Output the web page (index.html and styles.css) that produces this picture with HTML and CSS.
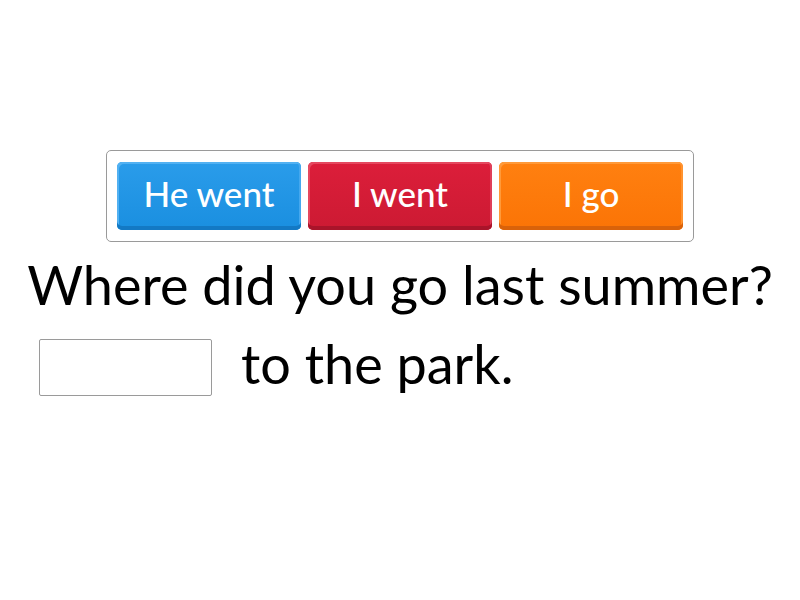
FILE: index.html
```html
<!DOCTYPE html>
<html lang="en">
<head>
  <meta charset="UTF-8">
  <title>Complete the sentence</title>
  <link rel="stylesheet" href="styles.css">
</head>
<body>
  <div class="game">
    <div class="options">
      <div class="tile blue">He went</div>
      <div class="tile red">I went</div>
      <div class="tile orange">I go</div>
    </div>
    <div class="question">Where did you go last summer?</div>
    <div class="answer">
      <span class="blank"></span>
      <span class="rest">to the park.</span>
    </div>
  </div>
</body>
</html>
```

FILE: styles.css
```css
body {
  margin: 0;
  background-color: #fff;
  font-family: Lato, "Open Sans", sans-serif;
  color: #000;
}
.game {
  width: 800px;
  height: 600px;
  padding-top: 150px;
  box-sizing: border-box;
}
.options {
  width: 588px;
  height: 92px;
  margin: 0 auto;
  box-sizing: border-box;
  border: 1px solid #9a9a9a;
  border-radius: 5px;
  padding: 11px 10px;
  display: flex;
  gap: 7px;
}
.tile {
  flex: 1;
  height: 68px;
  border-radius: 5px;
  color: #fff;
  font-size: 35px;
  font-weight: 500;
  display: flex;
  align-items: center;
  justify-content: center;
  padding-bottom: 6px;
  box-sizing: border-box;
}
.blue {
  background: linear-gradient(#2a9cea, #1a8fe0);
  box-shadow: inset 0 -4px 0 #1379c4, inset 2px 2px 0 #52b1f2, inset -2px 0 0 #45a8ee;
}
.red {
  background: linear-gradient(#dc1e3a, #cc1a33);
  box-shadow: inset 0 -4px 0 #a9142a, inset 2px 2px 0 #e5485f, inset -2px 0 0 #e0405a;
}
.orange {
  background: linear-gradient(#ff8010, #fb7406);
  box-shadow: inset 0 -4px 0 #d9620a, inset 2px 2px 0 #ff9a3a, inset -2px 0 0 #ff9330;
}
.question {
  text-align: center;
  font-size: 54px;
  margin-top: 11px;
  line-height: 64px;
}
.answer {
  display: flex;
  align-items: center;
  padding-left: 39px;
  margin-top: 15px;
  gap: 29px;
}
.blank {
  width: 173px;
  height: 57px;
  box-sizing: border-box;
  border: 1px solid #9a9a9a;
  border-radius: 2px;
}
.rest {
  font-size: 54px;
  line-height: 64px;
  margin-bottom: 6px;
}
```
